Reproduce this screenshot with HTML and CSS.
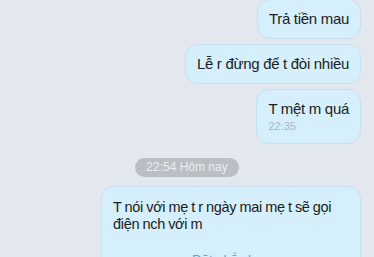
FILE: index.html
```html
<!DOCTYPE html>
<html lang="vi">
<head>
    <meta charset="UTF-8">
    <meta name="viewport" content="width=device-width, initial-scale=1.0">
    <title>Chat</title>
    <link rel="stylesheet" href="styles.css">
</head>
<body>
    <div class="chat">
        <div class="bubble first">Trả tiền mau</div>
        <div class="bubble">Lễ r đừng để t đòi nhiều</div>
        <div class="bubble">
            T mệt m quá
            <span class="time">22:35</span>
        </div>

        <div class="divider">
            <span class="pill">22:54 Hôm nay</span>
        </div>

        <div class="bubble wide">
            <span class="line">T nói với mẹ t r ngày mai mẹ t sẽ gọi</span>
            <span class="line">điện nch với m</span>
            <span class="reminder">Đặt nhắc hẹn</span>
        </div>
    </div>
</body>
</html>
```

FILE: styles.css
```css
body {
    margin: 0;
    background-color: #e3e8ef;
    font-family: "Liberation Sans", Arial, sans-serif;
    color: #1b1d20;
    overflow: hidden;
    height: 257px;
}

.chat {
    display: flex;
    flex-direction: column;
    align-items: flex-end;
    gap: 5px;
    padding: 0 13px;
    margin-top: -1px;
}

.bubble {
    background-color: #d5effc;
    border: 1px solid #c5e0ee;
    border-radius: 13px;
    padding: 9px 11px;
    font-size: 15px;
    line-height: 20px;
    letter-spacing: -0.3px;
}

.time {
    display: block;
    font-size: 11px;
    line-height: 14px;
    letter-spacing: 0;
    color: #a3b9c8;
    margin-bottom: 1px;
}

.divider {
    align-self: stretch;
    display: flex;
    justify-content: center;
    margin: 9px 0 4px;
}

.pill {
    background-color: #babec5;
    color: #eceef1;
    font-size: 12px;
    line-height: 19px;
    padding: 0 11px;
    border-radius: 10px;
}

.bubble.wide {
    width: 236px;
    font-size: 14.5px;
    line-height: 17px;
    padding-top: 12px;
    word-spacing: -0.5px;
}

.line {
    display: block;
    white-space: nowrap;
}

.reminder {
    display: block;
    text-align: center;
    color: #4ea5e0;
    font-size: 13px;
    letter-spacing: 0;
    word-spacing: 0;
    margin-top: 18px;
}
```
